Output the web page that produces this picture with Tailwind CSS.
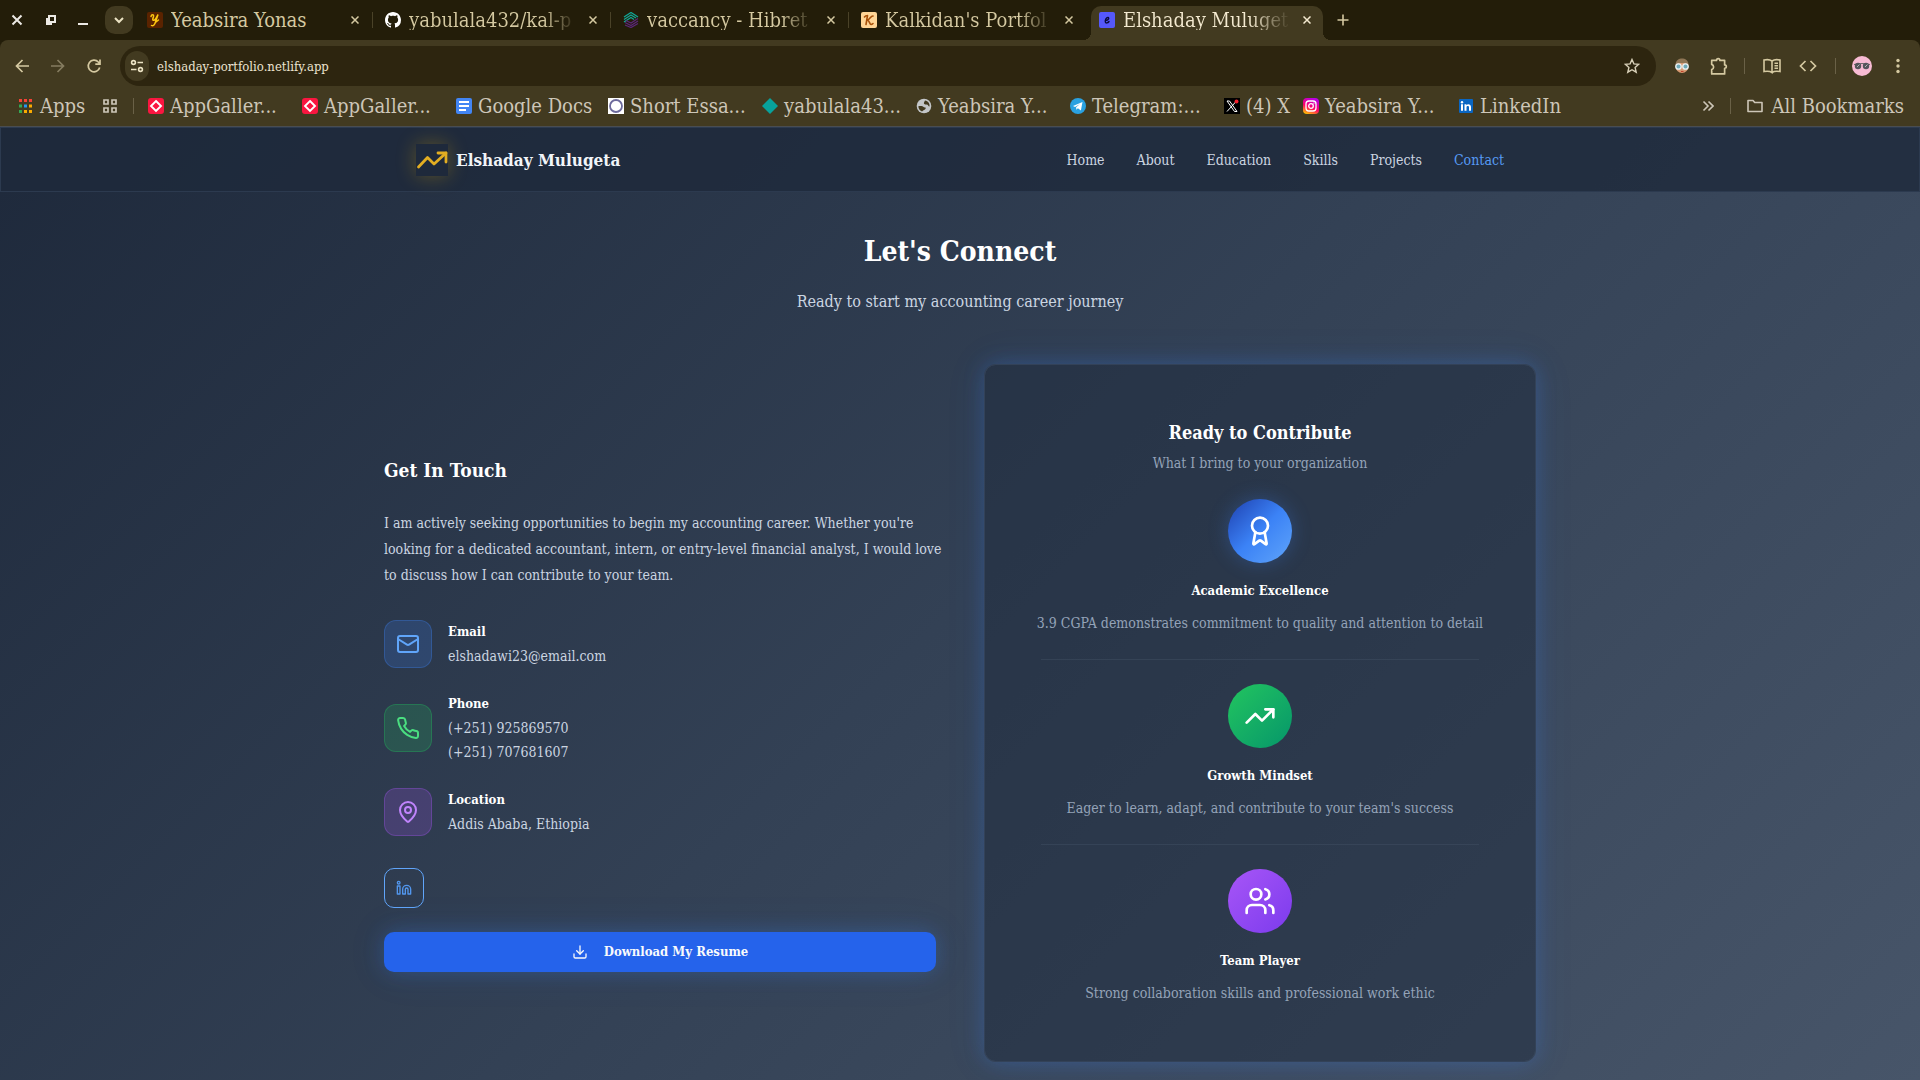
<!DOCTYPE html>
<html lang="en">
<head>
<meta charset="utf-8">
<title>Elshaday Mulugeta</title>
<script src="https://cdn.jsdelivr.net/npm/@tailwindcss/browser@4"></script>
</head>
<body class="flex min-h-screen flex-col bg-[#231d09] font-['DejaVu_Serif_Condensed','DejaVu_Serif',serif]">

<!-- Browser window -->
<div class="shrink-0 text-[#d5c9a1]">
  <!-- Tab strip -->
  <div class="flex h-10 items-end">
    <div class="flex h-full w-[135px] shrink-0 items-center">
      <button aria-label="Close window" class="ml-[9px] flex size-4 items-center justify-center text-[#ece9e4]"><svg class="size-3" viewBox="0 0 12 12" fill="none" stroke="currentColor" stroke-width="2"><path d="M1.500 1.500l9 9M10.500 1.500l-9 9"/></svg></button>
      <button aria-label="Restore window" class="ml-[18px] flex size-4 items-center justify-center text-[#ece9e4]"><svg class="size-3" viewBox="0 0 12 12" fill="none" stroke="currentColor" stroke-width="2"><path d="M4 2h6v6H4z"/><path d="M2 4v7M1 10h6" /></svg></button>
      <button aria-label="Minimize window" class="ml-4 flex size-4 items-center justify-center text-[#ece9e4]"><svg class="size-3" viewBox="0 0 12 12" fill="none" stroke="currentColor" stroke-width="2"><path d="M1 10h10"/></svg></button>
      <button aria-label="Search tabs" class="ml-[14px] flex size-7 items-center justify-center rounded-[10px] bg-[#423a20] text-[#ece3c4]"><svg class="size-3" viewBox="0 0 12 12" fill="none" stroke="currentColor" stroke-width="2"><path d="M2 4l4 4 4-4"/></svg></button>
    </div>

    <div class="relative flex w-[238px] items-end gap-2 pr-[10px] pb-3 pl-3">
      <svg class="size-4 shrink-0" viewBox="0 0 16 16"><rect width="16" height="16" rx="2" fill="#5a2300"/><path d="M4 4.500c.5-2.500 3-2.500 2.500 0l-.7 2.500c-.3 1.800 1.700 1.500 2.700 0L11 2.500 8.500 10c-.8 3-2.500 4.500-4 3.500M9 10l2.500-2" fill="none" stroke="#fdc810" stroke-width="1.500" stroke-linecap="round"/></svg>
      <span class="-mb-0.5 h-5 min-w-0 flex-1 overflow-hidden text-[20px] leading-5 whitespace-nowrap">Yeabsira Yonas</span>
      <button aria-label="Close tab" class="flex size-4 items-center justify-center"><svg class="size-2" viewBox="0 0 8 8" stroke="currentColor" stroke-width="1.500"><path d="M.5.5l7 7M7.500.5l-7 7"/></svg></button>
      <span class="absolute right-0 bottom-3 h-4 w-px bg-[#4a4228]"></span>
    </div>
    <div class="relative flex w-[238px] items-end gap-2 pr-[10px] pb-3 pl-3">
      <svg class="size-4 shrink-0" viewBox="0 0 16 16" fill="#fff"><path d="M8 0C3.580 0 0 3.580 0 8c0 3.540 2.290 6.530 5.470 7.590.4.070.55-.17.55-.38 0-.19-.01-.82-.01-1.490-2.010.37-2.530-.49-2.690-.94-.09-.23-.48-.94-.82-1.130-.28-.15-.68-.52-.01-.53.63-.01 1.080.58 1.230.82.72 1.210 1.870.87 2.330.66.07-.52.28-.87.51-1.070-1.780-.2-3.640-.89-3.640-3.950 0-.87.31-1.590.82-2.150-.08-.2-.36-1.020.08-2.120 0 0 .67-.21 2.200.82.64-.18 1.320-.27 2-.27s1.360.09 2 .27c1.530-1.040 2.200-.82 2.200-.82.44 1.100.16 1.920.08 2.120.51.56.82 1.270.82 2.150 0 3.070-1.870 3.750-3.650 3.950.29.25.54.73.54 1.480 0 1.070-.01 1.930-.01 2.200 0 .21.15.46.55.38A8.010 8.010 0 0 0 16 8c0-4.420-3.580-8-8-8z"/></svg>
      <span class="-mb-0.5 h-5 min-w-0 flex-1 overflow-hidden bg-linear-to-r from-[#d5c9a1] from-80% to-[#231d09] bg-clip-text text-[20px] leading-5 whitespace-nowrap text-transparent">yabulala432/kal-p</span>
      <button aria-label="Close tab" class="flex size-4 items-center justify-center"><svg class="size-2" viewBox="0 0 8 8" stroke="currentColor" stroke-width="1.500"><path d="M.5.5l7 7M7.500.5l-7 7"/></svg></button>
      <span class="absolute right-0 bottom-3 h-4 w-px bg-[#4a4228]"></span>
    </div>
    <div class="relative flex w-[238px] items-end gap-2 pr-[10px] pb-3 pl-3">
      <svg class="size-4 shrink-0" viewBox="0 0 16 16" fill="none" stroke-width="1.300"><path d="M1 5l7-4.500L15 5M1 7.500L8 3l5 3M1 10l7-4.500 3 2" stroke="#12a594"/><path d="M15 6.500L8 11 3 8.500M15 9l-7 4.500L2 10.500M15 11.500L8 15.500 2 13" stroke="#5b2678"/></svg>
      <span class="-mb-0.5 h-5 min-w-0 flex-1 overflow-hidden bg-linear-to-r from-[#d5c9a1] from-80% to-[#231d09] bg-clip-text text-[20px] leading-5 whitespace-nowrap text-transparent">vaccancy - Hibret</span>
      <button aria-label="Close tab" class="flex size-4 items-center justify-center"><svg class="size-2" viewBox="0 0 8 8" stroke="currentColor" stroke-width="1.500"><path d="M.5.5l7 7M7.500.5l-7 7"/></svg></button>
      <span class="absolute right-0 bottom-3 h-4 w-px bg-[#4a4228]"></span>
    </div>
    <div class="flex w-[238px] items-end gap-2 pr-[10px] pb-3 pl-3">
      <svg class="size-4 shrink-0" viewBox="0 0 16 16"><rect width="16" height="16" rx="2" fill="#ffd596"/><path d="M6.500 3.500L5 12.500M3.500 5c1-1.500 2-1.500 3-1.500M12 4c-1.500-.5-3 2.500-5.500 4.500 2-.5 2 4 3.500 4 .8 0 1.500-.5 2-1" fill="none" stroke="#a85008" stroke-width="1.600" stroke-linecap="round"/></svg>
      <span class="-mb-0.5 h-5 min-w-0 flex-1 overflow-hidden bg-linear-to-r from-[#d5c9a1] from-80% to-[#231d09] bg-clip-text text-[20px] leading-5 whitespace-nowrap text-transparent">Kalkidan's Portfol</span>
      <button aria-label="Close tab" class="flex size-4 items-center justify-center"><svg class="size-2" viewBox="0 0 8 8" stroke="currentColor" stroke-width="1.500"><path d="M.5.5l7 7M7.500.5l-7 7"/></svg></button>
    </div>
    <div class="relative mx-1 flex h-[34px] w-[232px] items-end gap-2 rounded-t-[10px] bg-[#423a20] pr-2 pb-3 pl-2 text-[#f4ead0]">
      <span class="absolute bottom-0 -left-2 size-2 bg-[radial-gradient(circle_at_0_0,#231d09_8px,#423a20_8px)]"></span>
      <span class="absolute -right-2 bottom-0 size-2 bg-[radial-gradient(circle_at_100%_0,#231d09_8px,#423a20_8px)]"></span>
      <svg class="size-4 shrink-0" viewBox="0 0 16 16"><rect width="16" height="16" rx="2" fill="#5558fb"/><path d="M6.500 8.500c3 0 4-2.800 2.500-3C7.300 5.300 6 8 6.300 9.800c.4 1.800 2.500 1.300 3.700-.3" fill="none" stroke="#0b0b3c" stroke-width="1.400" stroke-linecap="round"/></svg>
      <span class="-mb-0.5 h-5 min-w-0 flex-1 overflow-hidden bg-linear-to-r from-[#f4ead0] from-75% to-[#423a20] bg-clip-text text-[20px] leading-5 whitespace-nowrap text-transparent">Elshaday Muluget</span>
      <button aria-label="Close tab" class="flex size-4 items-center justify-center"><svg class="size-2" viewBox="0 0 8 8" stroke="currentColor" stroke-width="1.500"><path d="M.5.5l7 7M7.500.5l-7 7"/></svg></button>
    </div>
    <button aria-label="New tab" class="mb-3 ml-2 flex size-4 items-center justify-center"><svg class="size-3" viewBox="0 0 12 12" stroke="currentColor" stroke-width="1.600"><path d="M6 .5v11M.5 6h11"/></svg></button>
  </div>

  <div class="rounded-t-lg border-b border-[#4a4d50] bg-[#423a20]">
    <!-- Address bar -->
    <div class="flex h-[46px] items-end">
      <div class="flex h-10 w-[120px] shrink-0 items-center gap-5 pl-[14px]">
        <button aria-label="Back"><svg class="size-4" viewBox="0 0 16 16" fill="none" stroke="currentColor" stroke-width="1.700"><path d="M15 8H2.500M8.500 2L2.500 8l6 6"/></svg></button>
        <button aria-label="Forward" class="text-[#857c60]"><svg class="size-4" viewBox="0 0 16 16" fill="none" stroke="currentColor" stroke-width="1.700"><path d="M1 8h12.500M7.500 2l6 6-6 6"/></svg></button>
        <button aria-label="Reload"><svg class="size-4" viewBox="0 0 16 16" fill="none" stroke="currentColor" stroke-width="1.700"><path d="M13.700 9.500A5.800 5.800 0 1 1 12.300 4L14 5.700M14 1.500v4.700H9.300"/></svg></button>
      </div>
      <div class="flex h-10 min-w-0 flex-1 items-center rounded-full bg-[#2d250f] pr-4 pl-[5px]">
        <button aria-label="Site information" class="flex h-[30px] w-6 items-center justify-center rounded-full bg-[#423a20] text-[#ece3c4]"><svg class="size-[14px]" viewBox="0 0 14 14" fill="none" stroke="currentColor" stroke-width="1.600"><circle cx="3.500" cy="3.500" r="1.900"/><path d="M7.500 3.500H13M1 10.500h5.500"/><circle cx="10.500" cy="10.500" r="1.900"/></svg></button>
        <input aria-label="Address" value="elshaday-portfolio.netlify.app" class="ml-2 h-8 min-w-0 flex-1 bg-transparent text-[13px] text-[#ece3d0] outline-none">
        <button aria-label="Bookmark this page" class="text-[#d8d0b8]"><svg class="size-4" viewBox="0 0 16 16" fill="none" stroke="currentColor" stroke-width="1.400"><path d="M8 1.500l1.900 4.400 4.800.4-3.600 3.200 1.100 4.700L8 11.700l-4.200 2.500 1.100-4.700L1.300 6.300l4.800-.4z"/></svg></button>
      </div>
      <div class="flex h-10 w-[264px] shrink-0 items-center pl-[18px]">
        <button aria-label="Extension"><svg class="size-4" viewBox="0 0 16 16"><circle cx="8" cy="8.500" r="6.500" fill="#d89a72"/><path d="M1.500 7C1.500 2 5 .5 8 .5S14.500 2 14.500 7L12 5H4z" fill="#8f7656"/><circle cx="4.500" cy="8.500" r="2.700" fill="#6fa9b8" stroke="#e9f2f4" stroke-width="1.300"/><circle cx="11.500" cy="8.500" r="2.700" fill="#6fa9b8" stroke="#e9f2f4" stroke-width="1.300"/><path d="M7 13.500h2.500" stroke="#c0442c" stroke-width="1"/></svg></button>
        <button aria-label="Extensions" class="ml-5"><svg class="size-[18px]" viewBox="0 0 16 16" fill="none" stroke="currentColor" stroke-width="1.500"><path d="M1.500 3h4.300a1.500 1.500 0 0 1 3 0H13v4a1.500 1.500 0 0 1 0 3V15H1.500v-3.800a2.400 2.400 0 0 0 0-4.600z" stroke-linejoin="round"/></svg></button>
        <span class="ml-4 h-4 w-px bg-[#6a6147]"></span>
        <button aria-label="Reading list" class="ml-[18px]"><svg class="size-[18px]" viewBox="0 0 18 18" fill="none" stroke="currentColor" stroke-width="1.600"><path d="M9 4v11.500C7 14 4 14 1 14.500V3c3-.7 6-.5 8 1 2-1.500 5-1.700 8-1v11.500c-3-.5-6-.5-8 1M11.500 6.300h3.500M11.500 8.800h3.500M11.500 11.300h3.500"/></svg></button>
        <button aria-label="Developer tools" class="ml-[18px]"><svg class="size-[18px]" viewBox="0 0 18 18" fill="none" stroke="currentColor" stroke-width="1.700"><path d="M6.500 4L1.500 9l5 5M11.500 4l5 5-5 5"/></svg></button>
        <span class="ml-[18px] h-4 w-px bg-[#6a6147]"></span>
        <button aria-label="Profile" class="ml-4"><svg class="size-5" viewBox="0 0 20 20"><circle cx="10" cy="10" r="10" fill="#f8bbd4"/><path d="M2 8.500q8-2 16 0" fill="none" stroke="#666" stroke-width="1"/><circle cx="6" cy="10" r="3.200" fill="#55555c"/><circle cx="14" cy="10" r="3.200" fill="#55555c"/><path d="M5 11l2.500-2.500M13 11l2.500-2.500" stroke="#b5b5b8"/></svg></button>
        <button aria-label="Menu" class="ml-[18px]"><svg class="size-4" viewBox="0 0 16 16" fill="currentColor"><circle cx="8" cy="2.500" r="1.700"/><circle cx="8" cy="8" r="1.700"/><circle cx="8" cy="13.500" r="1.700"/></svg></button>
      </div>
    </div>

    <!-- Bookmarks -->
    <nav aria-label="Bookmarks" class="flex h-10 items-center text-[20px] leading-6 whitespace-nowrap text-[#cdc6b8]">
      <a href="#" class="ml-[18px] flex w-[84px] items-center gap-2"><svg class="size-[14px]" viewBox="0 0 14 14"><path d="M1 0h3v3H1zM6 0h3v3H6zM11 0h3v3h-3z" fill="#f44336"/><path d="M1 5.500h3v3H1zM1 11h3v3H1z" fill="#34a853"/><path d="M6 5.500h3v3H6z" fill="#2196f3"/><path d="M11 5.500h3v3h-3zM6 11h3v3H6zM11 11h3v3h-3z" fill="#fbab00"/></svg>Apps</a>
      <button aria-label="Tab groups" class="w-[31px]"><svg class="size-4" viewBox="0 0 16 16" fill="none" stroke="currentColor" stroke-width="1.700"><path d="M2 2h4v4H2zM10 2h4v4h-4zM2 10h4v4H2zM10 10h4v4h-4z"/></svg></button>
      <span class="mr-[14px] h-4 w-px bg-[#6a6147]"></span>
      <a href="#" class="flex w-[154px] items-center gap-[6px]"><svg class="size-4" viewBox="0 0 16 16"><rect width="16" height="16" rx="3" fill="#fa1640"/><path d="M8 3l5 5-5 5-5-5z" fill="none" stroke="#fff" stroke-width="1.900"/></svg>AppGaller...</a>
      <a href="#" class="flex w-[154px] items-center gap-[6px]"><svg class="size-4" viewBox="0 0 16 16"><rect width="16" height="16" rx="3" fill="#fa1640"/><path d="M8 3l5 5-5 5-5-5z" fill="none" stroke="#fff" stroke-width="1.900"/></svg>AppGaller...</a>
      <a href="#" class="flex w-[152px] items-center gap-[6px]"><svg class="size-4" viewBox="0 0 16 16"><rect width="16" height="16" rx="2" fill="#4285f4"/><path d="M3 4h10M3 8h10M3 12h7" stroke="#fff" stroke-width="2"/></svg>Google Docs</a>
      <a href="#" class="flex w-[154px] items-center gap-[6px]"><svg class="size-4" viewBox="0 0 16 16"><path fill="#fff" d="M0 0h16v16H0z"/><circle cx="8" cy="8" r="6" fill="none" stroke="#6d6a9c" stroke-width="1.800"/></svg>Short Essa...</a>
      <a href="#" class="flex w-[154px] items-center gap-[6px]"><svg class="size-4" viewBox="0 0 16 16"><path d="M8 0l8 8-8 8-8-8z" fill="#08a29c"/></svg>yabulala43...</a>
      <a href="#" class="flex w-[154px] items-center gap-[6px]"><svg class="size-4" viewBox="0 0 16 16"><circle cx="8" cy="8" r="7.300" fill="#c3c6c8"/><path d="M9 2.500c3 .5 5 3 4.500 6-1.500 0-1-2-3-2s-3-.5-2.500-2zM2.500 8h3c1.500 0 2 1.500 3.500 1.500s.5 2-1 2.500-1.500 1.500-2 1.500C3.500 12.500 2 10 2.500 8z" fill="#423a20"/></svg>Yeabsira Y...</a>
      <a href="#" class="flex w-[154px] items-center gap-[6px]"><svg class="size-4" viewBox="0 0 16 16"><circle cx="8" cy="8" r="8" fill="#2aa1e0"/><path d="M3 8l9.500-4-1.600 8.500-3-2.200-1.500 1.400-.3-2.500L10 6 5 9z" fill="#fff"/></svg>Telegram:...</a>
      <a href="#" class="flex w-[79px] items-center gap-[6px]"><svg class="size-4" viewBox="0 0 16 16"><path d="M0 0h16v16H0z"/><path d="M3 3h2.500L13 13.500h-2.500zM12.500 3L3 13.500" fill="none" stroke="#fff"/><circle cx="12.500" cy="3.500" r="2" fill="#f4212e"/></svg>(4) X</a>
      <a href="#" class="flex w-[155px] items-center gap-[6px]"><svg class="size-4" viewBox="0 0 16 16"><defs><linearGradient id="ig" x1="0.200" y1="1" x2="0.600" y2="0"><stop offset="0" stop-color="#ffc400"/><stop offset=".45" stop-color="#ff0069"/><stop offset="1" stop-color="#b900e6"/></linearGradient></defs><rect width="16" height="16" rx="4" fill="url(#ig)"/><rect x="3" y="3" width="10" height="10" rx="3" fill="none" stroke="#fff" stroke-width="1.300"/><circle cx="8" cy="8" r="2.300" fill="none" stroke="#fff" stroke-width="1.300"/><circle cx="10.900" cy="5.100" r=".7" fill="#fff"/></svg>Yeabsira Y...</a>
      <a href="#" class="flex items-center gap-[6px]"><svg class="size-4" viewBox="0 0 16 16"><rect x="1" y="1" width="14" height="14" rx="1" fill="#0a66c2"/><path d="M3 6.300h2v6.500H3zM6.500 6.300h1.900v.9c1-1.600 4.600-1.500 4.600 1.700v3.900h-2V9.400c0-2-2.500-1.800-2.500 0v3.400h-2z" fill="#fff"/><circle cx="4" cy="4.200" r="1.200" fill="#fff"/></svg>LinkedIn</a>
      <button aria-label="More bookmarks" class="ml-auto"><svg class="size-3" viewBox="0 0 12 12" fill="none" stroke="currentColor" stroke-width="1.600"><path d="M1.500 1.500L6 6l-4.500 4.500M6.500 1.500L11 6l-4.500 4.500"/></svg></button>
      <span class="mr-4 ml-4 h-4 w-px bg-[#6a6147]"></span>
      <a href="#" class="mr-4 flex items-center gap-2"><svg class="size-4" viewBox="0 0 16 16" fill="none" stroke="currentColor" stroke-width="1.600"><path d="M1 13.500V2.500h5l1.700 2H15v9z" stroke-linejoin="round"/></svg>All Bookmarks</a>
    </nav>
  </div>
</div>

<!-- Portfolio page -->
<div class="flex-1 bg-linear-[135deg,#1e293b,#334155_50%,#475569]">
  <header class="border border-[#2c3a4f] bg-[#1e293b]/80">
    <div class="mx-auto flex h-[63px] max-w-6xl items-center justify-between px-8">
      <a href="#" class="flex items-center gap-2 text-[17px] leading-6 font-bold text-slate-100">
        <span class="flex size-8 items-center justify-center bg-[#1e293b] shadow-[0_0_20px_rgba(234,179,8,0.3)]"><svg class="size-8" viewBox="0 0 32 32" fill="none" stroke="#e3ae22" stroke-width="2.800" stroke-linecap="round" stroke-linejoin="round"><path d="M2.500 23l9-9.500 6.500 6.500L30 9"/><path d="M22 9h8v9"/></svg></span>
        Elshaday Mulugeta
      </a>
      <nav aria-label="Sections" class="flex gap-8 text-[14px] leading-6 text-[#cbd5e1]">
        <a href="#">Home</a><a href="#">About</a><a href="#">Education</a><a href="#">Skills</a><a href="#">Projects</a><a href="#" class="text-[#569af3]">Contact</a>
      </nav>
    </div>
  </header>

  <main class="mx-auto max-w-6xl pt-10 pb-4">
    <div class="text-center">
      <h1 class="text-[28px] leading-10 font-bold text-white">Let's Connect</h1>
      <p class="mt-4 text-[16px] leading-7 text-[#cbd5e1]">Ready to start my accounting career journey</p>
    </div>

    <div class="mt-12 grid grid-cols-2 items-center gap-12">
      <section>
        <h2 class="text-[19px] leading-8 font-bold text-white">Get In Touch</h2>
        <p class="mt-6 text-[14px] leading-[26px] whitespace-nowrap text-[#cbd5e1]">I am actively seeking opportunities to begin my accounting career. Whether you're<br>looking for a dedicated accountant, intern, or entry-level financial analyst, I would love<br>to discuss how I can contribute to your team.</p>

        <div class="mt-8 flex flex-col gap-6 text-[14px] leading-6 text-[#cbd5e1]">
          <div class="flex items-center gap-4">
            <span class="flex size-12 items-center justify-center rounded-xl border border-[#3b82f6]/30 bg-[#3b82f6]/20 text-[#60a5fa]"><svg class="size-6" viewBox="0 0 24 24" fill="none" stroke="currentColor" stroke-width="2" stroke-linecap="round" stroke-linejoin="round"><rect width="20" height="16" x="2" y="4" rx="2"/><path d="m22 7-8.970 5.700a1.940 1.940 0 0 1-2.060 0L2 7"/></svg></span>
            <div><h3 class="text-[13px] leading-6 font-bold text-white">Email</h3><p>elshadawi23@email.com</p></div>
          </div>
          <div class="flex items-center gap-4">
            <span class="flex size-12 items-center justify-center rounded-xl border border-[#22c55e]/30 bg-[#22c55e]/20 text-[#4ade80]"><svg class="size-6" viewBox="0 0 24 24" fill="none" stroke="currentColor" stroke-width="2" stroke-linecap="round" stroke-linejoin="round"><path d="M22 16.920v3a2 2 0 0 1-2.180 2 19.790 19.790 0 0 1-8.630-3.070 19.500 19.500 0 0 1-6-6 19.790 19.790 0 0 1-3.070-8.670A2 2 0 0 1 4.110 2h3a2 2 0 0 1 2 1.720 12.840 12.840 0 0 0 .7 2.810 2 2 0 0 1-.45 2.110L8.090 9.910a16 16 0 0 0 6 6l1.270-1.270a2 2 0 0 1 2.110-.45 12.840 12.840 0 0 0 2.810.7A2 2 0 0 1 22 16.920z"/></svg></span>
            <div><h3 class="text-[13px] leading-6 font-bold text-white">Phone</h3><p>(+251) 925869570</p><p>(+251) 707681607</p></div>
          </div>
          <div class="flex items-center gap-4">
            <span class="flex size-12 items-center justify-center rounded-xl border border-[#a855f7]/30 bg-[#a855f7]/20 text-[#c084fc]"><svg class="size-6" viewBox="0 0 24 24" fill="none" stroke="currentColor" stroke-width="2" stroke-linecap="round" stroke-linejoin="round"><path d="M20 10c0 4.990-5.540 10.190-7.400 11.800a1 1 0 0 1-1.200 0C9.540 20.190 4 14.990 4 10a8 8 0 0 1 16 0"/><circle cx="12" cy="10" r="3"/></svg></span>
            <div><h3 class="text-[13px] leading-6 font-bold text-white">Location</h3><p>Addis Ababa, Ethiopia</p></div>
          </div>
        </div>

        <a href="#" aria-label="LinkedIn" class="mt-8 flex size-10 items-center justify-center rounded-[10px] border border-[#60a5fa] text-[#5297ee]"><svg class="size-4" viewBox="0 0 24 24" fill="none" stroke="currentColor" stroke-width="2" stroke-linecap="round" stroke-linejoin="round"><path d="M16 8a6 6 0 0 1 6 6v7h-4v-7a2 2 0 0 0-2-2 2 2 0 0 0-2 2v7h-4v-7a6 6 0 0 1 6-6z"/><rect width="4" height="12" x="2" y="9"/><circle cx="4" cy="4" r="2"/></svg></a>
        <button class="mt-6 flex h-10 w-full items-center justify-center gap-4 rounded-[10px] bg-[#2563eb] text-[13px] font-bold text-slate-50 shadow-[0_0_20px_rgba(59,130,246,0.25),0_0_40px_rgba(59,130,246,0.1)]"><svg class="size-4" viewBox="0 0 24 24" fill="none" stroke="currentColor" stroke-width="2" stroke-linecap="round" stroke-linejoin="round"><path d="M21 15v4a2 2 0 0 1-2 2H5a2 2 0 0 1-2-2v-4"/><path d="m7 10 5 5 5-5"/><path d="M12 15V3"/></svg>Download My Resume</button>
      </section>

      <section class="rounded-xl border border-[#334258] bg-[#1e293b]/50 bg-clip-padding p-14 text-center text-[14px] leading-6 whitespace-nowrap text-[#94a3b8] shadow-[0_0_20px_rgba(59,130,246,0.25),0_0_40px_rgba(59,130,246,0.1)]">
        <h2 class="text-[18px] leading-6 font-bold text-white">Ready to Contribute</h2>
        <p class="mt-[6px]">What I bring to your organization</p>
        <div class="mt-6 border-b border-[#475569]/40 pb-6">
          <span class="mx-auto flex size-16 items-center justify-center rounded-full bg-linear-[135deg,#1e40af,#3b82f6_50%,#60a5fa] text-white shadow-[0_0_20px_rgba(59,130,246,0.3)]"><svg class="size-8" viewBox="0 0 24 24" fill="none" stroke="currentColor" stroke-width="2" stroke-linecap="round" stroke-linejoin="round"><path d="m15.477 12.890 1.515 8.526a.5.5 0 0 1-.810.470l-3.580-2.687a1 1 0 0 0-1.197 0l-3.586 2.686a.5.5 0 0 1-.810-.469l1.514-8.526"/><circle cx="12" cy="8" r="6"/></svg></span>
          <h3 class="mt-4 text-[13px] leading-6 font-bold text-white">Academic Excellence</h3>
          <p class="mt-2 -mx-2">3.9 CGPA demonstrates commitment to quality and attention to detail</p>
        </div>
        <div class="mt-6 border-b border-[#475569]/40 pb-6">
          <span class="mx-auto flex size-16 items-center justify-center rounded-full bg-linear-135 from-[#22c55e] to-[#059669] text-white"><svg class="size-8" viewBox="0 0 24 24" fill="none" stroke="currentColor" stroke-width="2" stroke-linecap="round" stroke-linejoin="round"><path d="m22 7-8.500 8.500-5-5L2 17"/><path d="M16 7h6v6"/></svg></span>
          <h3 class="mt-4 text-[13px] leading-6 font-bold text-white">Growth Mindset</h3>
          <p class="mt-2">Eager to learn, adapt, and contribute to your team's success</p>
        </div>
        <div class="mt-6">
          <span class="mx-auto flex size-16 items-center justify-center rounded-full bg-linear-135 from-[#a855f7] to-[#7c3aed] text-white"><svg class="size-8" viewBox="0 0 24 24" fill="none" stroke="currentColor" stroke-width="2" stroke-linecap="round" stroke-linejoin="round"><path d="M16 21v-2a4 4 0 0 0-4-4H6a4 4 0 0 0-4 4v2"/><circle cx="9" cy="7" r="4"/><path d="M22 21v-2a4 4 0 0 0-3-3.870"/><path d="M16 3.130a4 4 0 0 1 0 7.750"/></svg></span>
          <h3 class="mt-4 text-[13px] leading-6 font-bold text-white">Team Player</h3>
          <p class="mt-2">Strong collaboration skills and professional work ethic</p>
        </div>
      </section>
    </div>
  </main>
</div>
</body>
</html>
